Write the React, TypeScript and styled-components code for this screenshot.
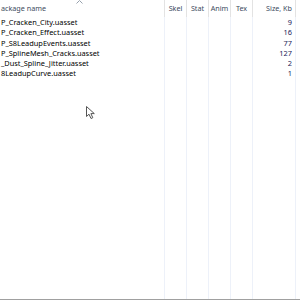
import styled, { createGlobalStyle } from 'styled-components';

const GlobalStyle = createGlobalStyle`
    html, body {
        margin: 0;
        padding: 0;
        background: #ffffff;
    }
`;

const COLUMNS = [
    { key: 'name', title: 'ackage name', width: 165, align: 'left' },
    { key: 'skel', title: 'Skel', width: 22, align: 'center' },
    { key: 'stat', title: 'Stat', width: 22, align: 'center' },
    { key: 'anim', title: 'Anim', width: 22, align: 'center' },
    { key: 'tex', title: 'Tex', width: 22, align: 'center' },
    { key: 'size', title: 'Size, Kb', width: 43, align: 'right' },
];

const ROWS = [
    { name: 'P_Cracken_City.uasset', size: 9 },
    { name: 'P_Cracken_Effect.uasset', size: 16 },
    { name: 'P_S8LeadupEvents.uasset', size: 77 },
    { name: 'P_SplineMesh_Cracks.uasset', size: 127 },
    { name: '_Dust_Spline_Jitter.uasset', size: 2 },
    { name: '8LeadupCurve.uasset', size: 1 },
];

const ListView = styled.div`
    position: relative;
    width: 300px;
    height: 300px;
    box-sizing: border-box;
    border-bottom: 1px solid #a0a0a0;
    overflow: hidden;
    font-family: 'Noto Sans', 'Open Sans', sans-serif;
    display: flex;
    flex-direction: column;
`;

const Header = styled.div`
    display: flex;
    height: 17px;
    flex-shrink: 0;
`;

const HeaderCell = styled.div<{ $width: number; $align: string }>`
    width: ${(p) => p.$width}px;
    flex-shrink: 0;
    box-sizing: border-box;
    border-right: 1px solid #e3e3e3;
    padding: 0 ${(p) => (p.$align === 'right' ? 3 : 0)}px 0 ${(p) => (p.$align === 'left' ? 1 : 0)}px;
    text-align: ${(p) => p.$align};
    font-size: 7.2px;
    line-height: 17px;
    color: #3d4b5e;
    white-space: nowrap;
    overflow: hidden;
`;

const Body = styled.div`
    position: relative;
    flex: 1;
    display: flex;
    flex-direction: column;
`;

const GridLines = styled.div`
    position: absolute;
    inset: 0;
    display: flex;
    pointer-events: none;
`;

const GridColumn = styled.div<{ $width: number }>`
    width: ${(p) => p.$width}px;
    flex-shrink: 0;
    box-sizing: border-box;
    border-right: 1px solid #edf1f9;
`;

const Row = styled.div`
    display: flex;
    height: 10.25px;
`;

const Cell = styled.div<{ $width: number; $align: string }>`
    width: ${(p) => p.$width}px;
    flex-shrink: 0;
    box-sizing: border-box;
    padding: 0 ${(p) => (p.$align === 'right' ? 4 : 1)}px 0 1px;
    text-align: ${(p) => p.$align};
    font-size: 7.4px;
    line-height: 10.25px;
    color: #000000;
    white-space: nowrap;
    overflow: hidden;
`;

const SizeText = styled.span`
    color: #1a1a58;
`;

const SortArrow = styled.svg`
    position: absolute;
    left: 76px;
    top: 0;
`;

const Cursor = styled.svg`
    position: absolute;
    left: 86px;
    top: 106px;
`;

export default function App() {
    return (
        <>
            <GlobalStyle />
            <ListView>
                <Header>
                    {COLUMNS.map((col) => (
                        <HeaderCell key={col.key} $width={col.width} $align={col.align}>
                            {col.title}
                        </HeaderCell>
                    ))}
                </Header>
                <Body>
                    <GridLines>
                        {COLUMNS.map((col) => (
                            <GridColumn key={col.key} $width={col.width} />
                        ))}
                    </GridLines>
                    {ROWS.map((row) => (
                        <Row key={row.name}>
                            <Cell $width={165} $align="left">
                                {row.name}
                            </Cell>
                            <Cell $width={22} $align="left" />
                            <Cell $width={22} $align="left" />
                            <Cell $width={22} $align="left" />
                            <Cell $width={22} $align="left" />
                            <Cell $width={43} $align="right">
                                <SizeText>{row.size}</SizeText>
                            </Cell>
                        </Row>
                    ))}
                </Body>
                <SortArrow width="7" height="4" viewBox="0 0 7 4">
                    <path d="M0.5 3.5 L3.5 0.5 L6.5 3.5" fill="none" stroke="#97a1ad" strokeWidth="1" />
                </SortArrow>
                <Cursor width="11" height="14" viewBox="0 0 11 14">
                    <path
                        d="M0.5 0.5 L0.5 10.5 L3 8.2 L5 12.5 L6.8 11.7 L4.9 7.6 L8.3 7.6 Z"
                        fill="#ffffff"
                        stroke="#555555"
                        strokeWidth="1"
                        strokeLinejoin="round"
                    />
                </Cursor>
            </ListView>
        </>
    );
}
